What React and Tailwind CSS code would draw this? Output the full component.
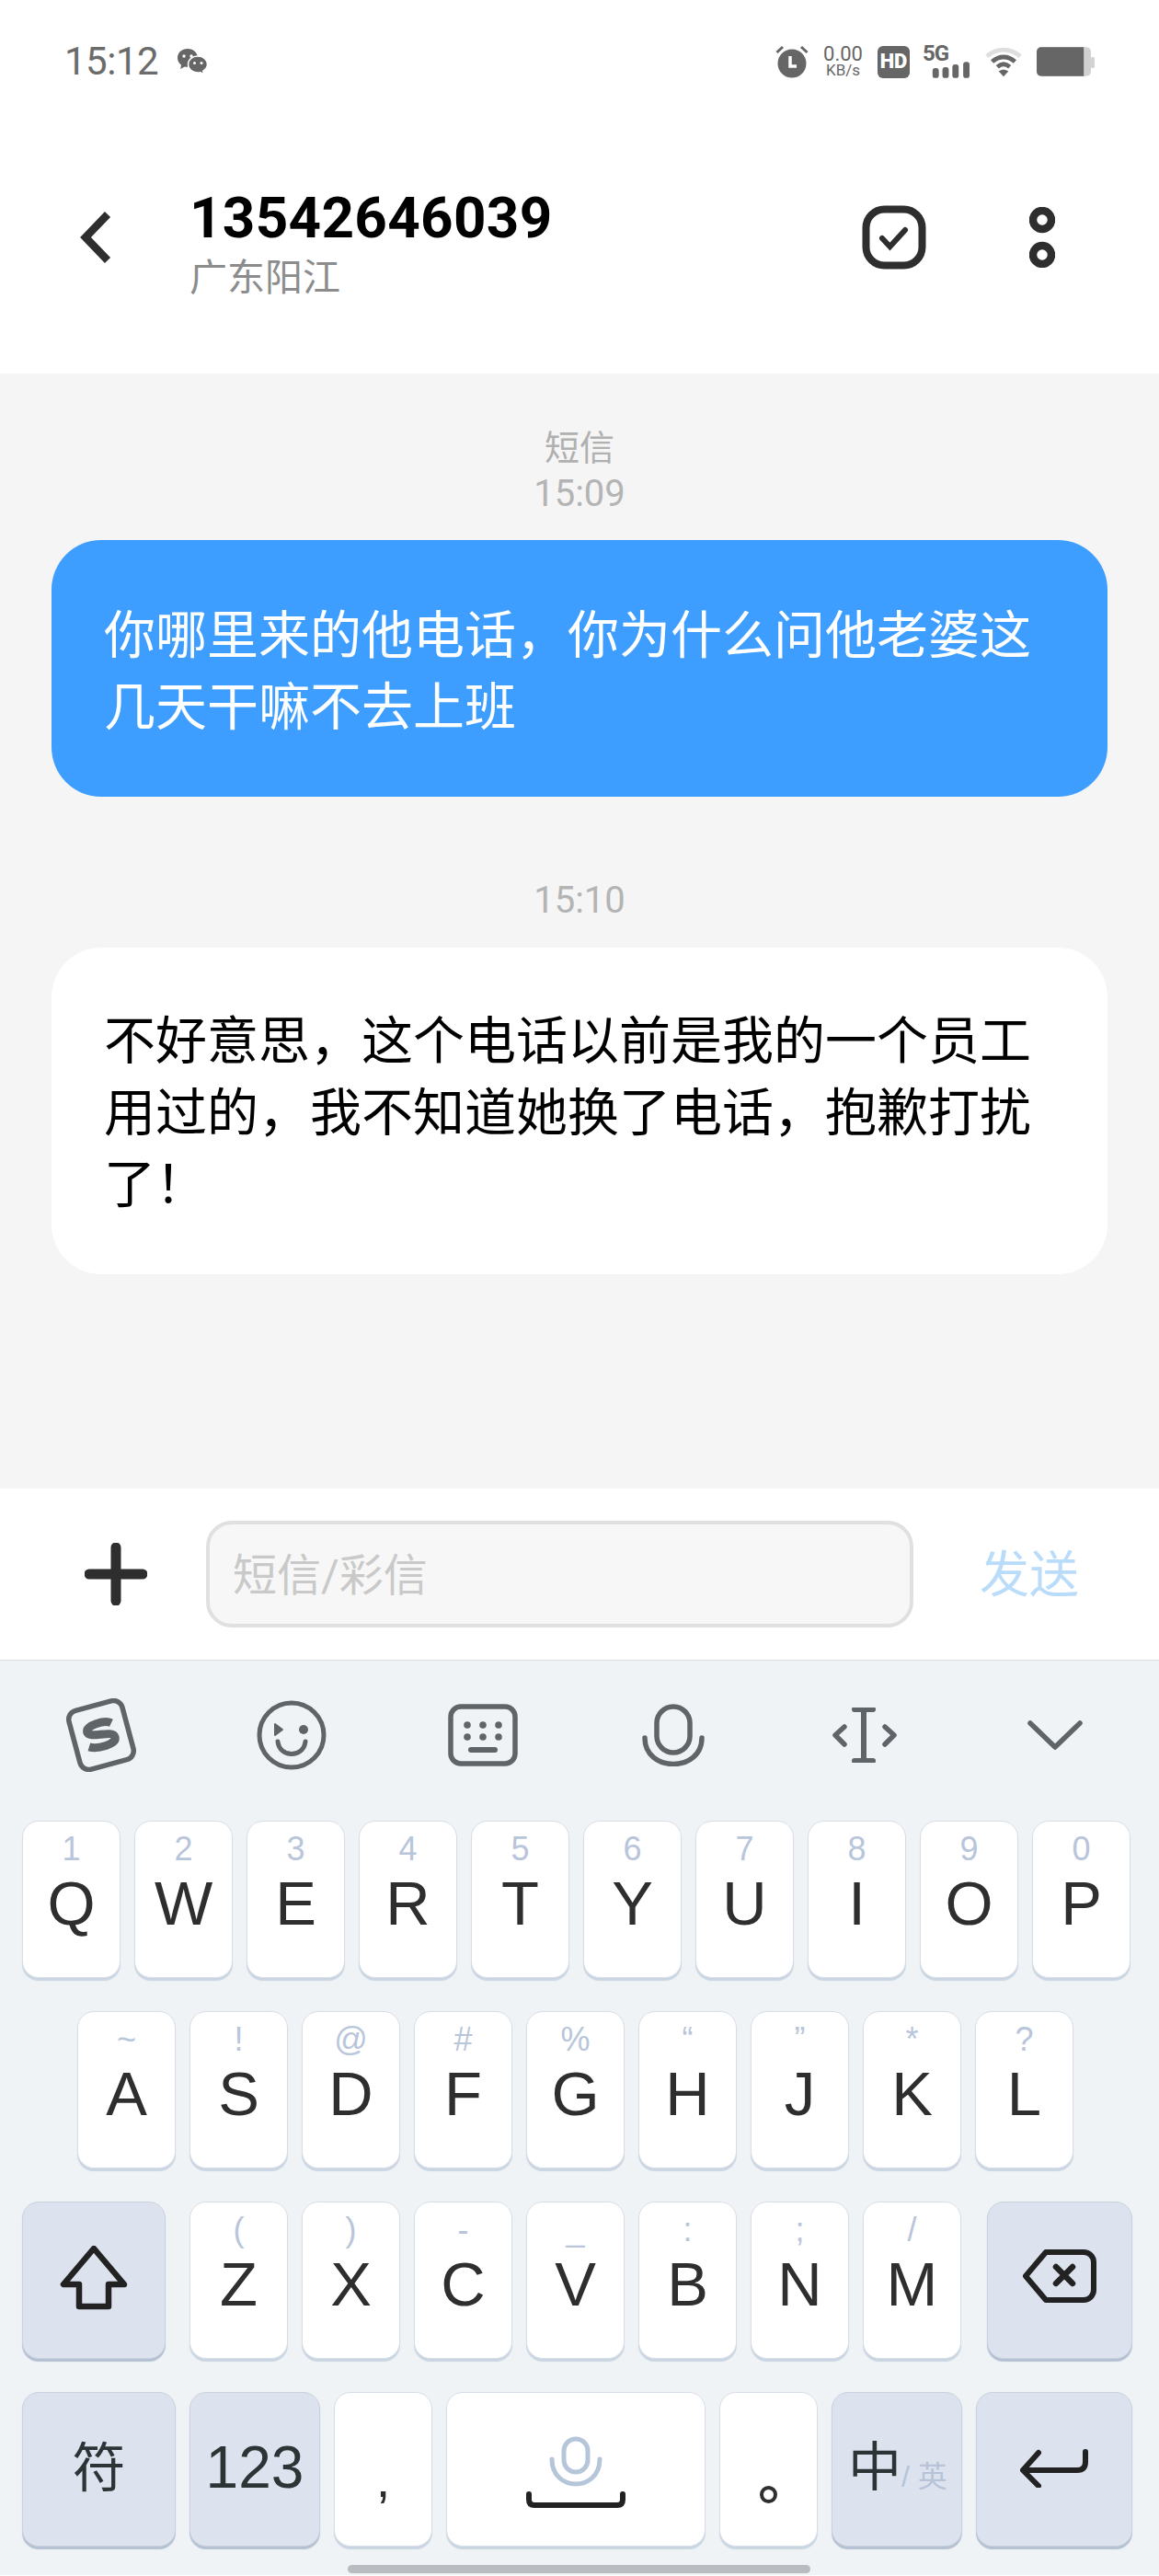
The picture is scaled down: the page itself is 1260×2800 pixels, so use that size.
import React from "react";

const row1 = [
  ["Q", "1"], ["W", "2"], ["E", "3"], ["R", "4"], ["T", "5"],
  ["Y", "6"], ["U", "7"], ["I", "8"], ["O", "9"], ["P", "0"],
];
const row2 = [
  ["A", "~"], ["S", "!"], ["D", "@"], ["F", "#"], ["G", "%"],
  ["H", "“"], ["J", "”"], ["K", "*"], ["L", "?"],
];
const row3 = [
  ["Z", "("], ["X", ")"], ["C", "-"], ["V", "_"], ["B", ":"], ["N", ";"], ["M", "/"],
];

const LetterKey = ({ letter, hint }) => (
  <div className="flex h-[171px] w-[107px] flex-col items-center rounded-[18px] border border-[#d8dee6] bg-white pt-[12px] shadow-[0_3px_1px_#c9d5e2]">
    <span className="h-[36px] text-[36px] leading-[36px] text-[#b8c5da]">{hint}</span>
    <span className="mt-[9px] text-[67px] leading-[64px] text-[#2e2e2e]">{letter}</span>
  </div>
);

const StatusBar = () => (
  <div className="flex h-[134px] items-center pl-[70px] pr-[70px] text-[#666]">
    <span className="font-['Roboto'] text-[42px] leading-none tracking-[-0.5px] text-[#6b6b6b]">15:12</span>
    <svg width="34" height="28" viewBox="0 0 34 28" className="ml-[20px]">
      <path d="M12 0C5.5 0 1 4.3 1 10c0 3.2 1.5 5.6 4 7.4L4.2 22l4.6-2.6c1 .3 2 .4 3.2.4 6.5 0 11-4.400 11-9.800S18.500 0 12 0z" fill="#666" />
      <circle cx="8" cy="8" r="1.700" fill="#fff" />
      <circle cx="16" cy="8" r="1.700" fill="#fff" />
      <path d="M23 8c-6 0-10.500 4-10.500 9s4.500 9 10.500 9c1 0 2-.1 2.800-.4l3.700 2.200-.7-3.700c2.800-1.700 4.700-4.100 4.700-7.100 0-5-4.500-9-10.500-9z" fill="#666" stroke="#fff" strokeWidth="1.500" />
      <circle cx="19.500" cy="15.500" r="1.500" fill="#fff" />
      <circle cx="27" cy="15.500" r="1.500" fill="#fff" />
    </svg>
    <div className="ml-auto flex items-center">
      <svg width="36" height="36" viewBox="0 0 36 36">
        <circle cx="18" cy="20" r="15.500" fill="#666" />
        <path d="M16 12v11h7" fill="none" stroke="#fff" strokeWidth="3.500" />
        <path d="M1.500 8 8 2M34.500 8 28 2" stroke="#666" strokeWidth="3" />
      </svg>
      <div className="ml-[16px] flex w-[43px] flex-col items-center font-['Roboto']">
        <span className="text-[22px] leading-[19px] text-[#666]">0.00</span>
        <span className="text-[17px] leading-[17px] text-[#666]">KB/s</span>
      </div>
      <div className="ml-[16px] flex h-[35px] w-[35px] items-center justify-center rounded-[6px] bg-[#666] font-['Roboto'] text-[22px] font-black leading-none text-white">
        HD
      </div>
      <div className="ml-[14px] flex h-[36px] w-[51px] flex-col">
        <span className="font-['Roboto'] text-[24px] font-bold leading-[19px] tracking-[-1px] text-[#666]">5G</span>
        <svg width="51" height="19" viewBox="0 0 52 19" className="-mt-[2px]">
          <rect x="11" y="8" width="7" height="11" rx="3" fill="#666" />
          <rect x="22" y="7" width="7" height="12" rx="3" fill="#666" />
          <rect x="33" y="4" width="7" height="15" rx="3" fill="#666" />
          <rect x="45" y="1" width="7" height="18" rx="3" fill="#666" />
        </svg>
      </div>
      <svg width="42" height="34" viewBox="0 0 44 34" className="ml-[16px]">
        <path d="M3 11C14 1 30 1 41 11" fill="none" stroke="#dedede" strokeWidth="5" />
        <path d="M9 17c8-7 18-7 26 0" fill="none" stroke="#666" strokeWidth="5" />
        <path d="M15 23c4.500-4 9.500-4 14 0" fill="none" stroke="#666" strokeWidth="5" />
        <path d="M16.500 28c3.500-2.500 7.500-2.500 11 0L22 34z" fill="#666" />
      </svg>
      <svg width="63" height="32" viewBox="0 0 64 32" className="ml-[15px]">
        <rect x="0" y="0" width="60" height="32" rx="5" fill="#d2d2d2" />
        <path d="M5 0h47v32H5a5 5 0 0 1-5-5V5a5 5 0 0 1 5-5z" fill="#666" />
        <rect x="60" y="11" width="4" height="12" rx="1.500" fill="#d2d2d2" />
      </svg>
    </div>
  </div>
);

const NavBar = () => (
  <div className="flex h-[272px] items-center pb-[24px] pl-[87px]">
    <svg width="34" height="56" viewBox="0 0 34 56">
      <path d="M30 3 6 28l24 25" fill="none" stroke="#2e2e2e" strokeWidth="8.500" />
    </svg>
    <div className="ml-[85px] mt-[14px] flex w-[393px] flex-col gap-[6px]">
      <span className="font-['Roboto'] text-[62px] font-bold leading-[68px] tracking-[0.3px] text-black">13542646039</span>
      <span className="text-[41px] leading-[50px] text-[#8c8c8c]">广东阳江</span>
    </div>
    <svg width="70" height="70" viewBox="0 0 70 70" className="ml-[338px]">
      <rect x="4.500" y="4.500" width="61" height="61" rx="20" fill="none" stroke="#2e2e2e" strokeWidth="8" />
      <path d="M22 36l8.500 9L47 27" fill="none" stroke="#2e2e2e" strokeWidth="6" strokeLinecap="round" strokeLinejoin="miter" />
    </svg>
    <svg width="28" height="66" viewBox="0 0 28 66" className="ml-[112px]">
      <circle cx="14" cy="14" r="10" fill="none" stroke="#2e2e2e" strokeWidth="8.500" />
      <circle cx="14" cy="52" r="10" fill="none" stroke="#2e2e2e" strokeWidth="8.500" />
    </svg>
  </div>
);

const Chat = () => (
  <div className="flex h-[1212px] flex-col items-center bg-[#f5f5f5] px-[56px] pt-[59px]">
    <span className="text-[38px] leading-[44px] text-[#b0b0b0]">短信</span>
    <span className="mt-[6px] font-['Roboto'] text-[40px] leading-[44px] text-[#b4b4b4]">15:09</span>
    <div className="mt-[28px] w-full rounded-[54px] bg-[#3d9eff] pb-[58px] pl-[57px] pr-[59px] pt-[65px] text-[56px] leading-[78px] text-white">
      你哪里来的他电话，你为什么问他老婆这几天干嘛不去上班
    </div>
    <span className="mt-[91px] font-['Roboto'] text-[40px] leading-[44px] text-[#b4b4b4]">15:10</span>
    <div className="mt-[29px] w-full rounded-[54px] bg-white pb-[58px] pl-[57px] pr-[59px] pt-[63px] text-[56px] leading-[78px] text-black">
      不好意思，这个电话以前是我的一个员工用过的，我不知道她换了电话，抱歉打扰了！
    </div>
  </div>
);

const InputBar = () => (
  <div className="flex h-[187px] items-center border-b border-[#dddddd] bg-white">
    <svg width="68" height="68" viewBox="0 0 68 68" className="ml-[92px]">
      <path d="M34 5v58M5 34h58" stroke="#2e2e2e" strokeWidth="11" strokeLinecap="round" />
    </svg>
    <div className="ml-[64px] flex h-[116px] w-[769px] items-center rounded-[28px] border-[4px] border-[#e0e0e0] bg-[#f7f7f7] pl-[25px] pt-[4px] text-[48px] text-[#c9c9c9]">
      短信/彩信
    </div>
    <span className="ml-[72px] pt-[4px] text-[54px] leading-none text-[#b9dcfa]">发送</span>
  </div>
);

const Toolbar = () => (
  <div className="grid h-[161px] grid-cols-6 items-center justify-items-center px-[6px] pr-[9px]">
    <svg width="80" height="80" viewBox="0 0 80 80">
      <g transform="rotate(-15 40 40)">
        <rect x="10" y="7" width="60" height="66" rx="10" fill="none" stroke="#5f6468" strokeWidth="5.500" />
        <path d="M54 30c-6-5-28-5-28 3 0 8 28 4 28 13 0 8-22 8-30 3" fill="none" stroke="#5f6468" strokeWidth="9" />
      </g>
    </svg>
    <svg width="76" height="76" viewBox="0 0 76 76">
      <circle cx="38" cy="38" r="35" fill="none" stroke="#5f6468" strokeWidth="5" />
      <path d="M20 26l8 6-8 6z" fill="#5f6468" stroke="#5f6468" strokeWidth="2" strokeLinejoin="round" />
      <circle cx="51" cy="32" r="5" fill="#5f6468" />
      <path d="M23 45c2 18 28 18 30 0" fill="none" stroke="#5f6468" strokeWidth="5" strokeLinecap="round" />
    </svg>
    <svg width="76" height="68" viewBox="0 0 76 68">
      <rect x="3" y="3" width="70" height="62" rx="11" fill="none" stroke="#5f6468" strokeWidth="5.500" />
      {[21, 38, 55].map((x) =>
        [23, 36].map((y) => <circle key={`${x}-${y}`} cx={x} cy={y} r="3.800" fill="#5f6468" />)
      )}
      <path d="M25 50h26" stroke="#5f6468" strokeWidth="6" strokeLinecap="round" />
    </svg>
    <svg width="68" height="68" viewBox="0 0 68 68">
      <rect x="16" y="3" width="36" height="50" rx="18" fill="none" stroke="#5f6468" strokeWidth="5.500" />
      <path d="M3 37c0 38 62 38 62 0" fill="none" stroke="#5f6468" strokeWidth="5.500" strokeLinecap="round" />
    </svg>
    <svg width="70" height="60" viewBox="0 0 70 60">
      <path d="M24 2h20M24 58h20M34 2v56" stroke="#5f6468" strokeWidth="6" strokeLinecap="round" />
      <path d="M13 21 3 30l10 10M57 21l10 9-10 10" fill="none" stroke="#5f6468" strokeWidth="5.500" strokeLinecap="round" strokeLinejoin="round" />
    </svg>
    <svg width="60" height="32" viewBox="0 0 60 32">
      <path d="M3 3l27 26L57 3" fill="none" stroke="#5f6468" strokeWidth="5.500" strokeLinecap="round" strokeLinejoin="round" />
    </svg>
  </div>
);

const Keyboard = () => (
  <div className="h-[994px] bg-[#eff3f6] font-['Liberation_Sans','Noto_Sans_CJK_SC',sans-serif]">
    <Toolbar />
    <div className="mt-[13px] flex flex-col gap-[36px] pl-[24px]">
      <div className="flex gap-[15px]">
        {row1.map(([l, h]) => <LetterKey key={l} letter={l} hint={h} />)}
      </div>
      <div className="flex gap-[15px] pl-[60px]">
        {row2.map(([l, h]) => <LetterKey key={l} letter={l} hint={h} />)}
      </div>
      <div className="flex">
        <div className="flex h-[171px] w-[156px] items-center justify-center rounded-[18px] border border-[#c9d2de] bg-[#dce3ee] pb-[6px] shadow-[0_3px_1px_#b4c0d2]">
          <svg width="74" height="70" viewBox="0 0 74 70">
            <path d="M37 3 4 42h17v24h32V42h17z" fill="none" stroke="#222" strokeWidth="6.500" strokeLinejoin="round" />
          </svg>
        </div>
        <div className="ml-[26px] flex gap-[15px]">
          {row3.map(([l, h]) => <LetterKey key={l} letter={l} hint={h} />)}
        </div>
        <div className="ml-[28px] flex h-[171px] w-[158px] items-center justify-center rounded-[18px] border border-[#c9d2de] bg-[#dce3ee] pb-[10px] shadow-[0_3px_1px_#b4c0d2]">
          <svg width="80" height="58" viewBox="0 0 80 58">
            <path d="M25 3h41a11 11 0 0 1 11 11v30a11 11 0 0 1-11 11H25L3 29z" fill="none" stroke="#222" strokeWidth="6" strokeLinejoin="round" />
            <path d="M36 19l18 18M54 19 36 37" stroke="#222" strokeWidth="6.500" strokeLinecap="round" />
          </svg>
        </div>
      </div>
      <div className="flex gap-[15px]">
        <div className="flex h-[168px] w-[167px] items-center justify-center rounded-[18px] border border-[#c9d2de] bg-[#dce3ee] pb-[4px] text-[58px] text-[#2d3436] shadow-[0_3px_1px_#b4c0d2]">
          符
        </div>
        <div className="flex h-[168px] w-[142px] items-center justify-center rounded-[18px] border border-[#c9d2de] bg-[#dce3ee] pb-[4px] text-[64px] text-[#2d3436] shadow-[0_3px_1px_#b4c0d2]">
          123
        </div>
        <div className="flex h-[168px] w-[107px] items-start justify-center rounded-[18px] border border-[#d8dee6] bg-white pt-[66px] text-[56px] leading-[56px] text-[#2e2e2e] shadow-[0_3px_1px_#c9d5e2]">
          ,
        </div>
        <div className="flex h-[168px] w-[282px] flex-col items-center rounded-[18px] border border-[#d8dee6] bg-white pt-[46px] shadow-[0_3px_1px_#c9d5e2]">
          <svg width="108" height="80" viewBox="0 0 108 80">
            <rect x="41" y="4" width="26" height="36" rx="13" fill="none" stroke="#b6c6da" strokeWidth="5" />
            <path d="M28 26c0 36 52 36 52 0" fill="none" stroke="#b6c6da" strokeWidth="5" strokeLinecap="round" />
            <path d="M3 64v6c0 4 2 6 6 6h90c4 0 6-2 6-6v-6" fill="none" stroke="#222" strokeWidth="6" strokeLinecap="round" />
          </svg>
        </div>
        <div className="flex h-[168px] w-[107px] items-start justify-center rounded-[18px] border border-[#d8dee6] bg-white pt-[101px] shadow-[0_3px_1px_#c9d5e2]">
          <span className="h-[19px] w-[19px] rounded-full border-[4px] border-[#2e2e2e]" />
        </div>
        <div className="flex h-[168px] w-[142px] items-center rounded-[18px] border border-[#c9d2de] bg-[#dce3ee] pb-[4px] pl-[17px] text-[#2d3436] shadow-[0_3px_1px_#b4c0d2]">
          <span className="text-[58px] leading-none">中</span>
          <span className="mt-[20px] text-[32px] leading-none text-[#b6c3d8]">/ 英</span>
        </div>
        <div className="flex h-[168px] w-[170px] items-center justify-center rounded-[18px] border border-[#c9d2de] bg-[#dce3ee] pb-[2px] shadow-[0_3px_1px_#b4c0d2]">
          <svg width="74" height="42" viewBox="0 0 74 42">
            <path d="M71 3v11c0 6-3 9-9 9H4M20 4 3 23l17 17" fill="none" stroke="#222" strokeWidth="6" strokeLinecap="round" strokeLinejoin="round" />
          </svg>
        </div>
      </div>
    </div>
    <div className="ml-[378px] mt-[20px] h-[9px] w-[503px] rounded-full bg-[#b9bcc1]" />
  </div>
);

export default function App() {
  return (
    <div className="h-[2800px] w-[1260px] overflow-hidden bg-white font-['Roboto','Noto_Sans_CJK_SC',sans-serif]">
      <StatusBar />
      <NavBar />
      <Chat />
      <InputBar />
      <Keyboard />
    </div>
  );
}
